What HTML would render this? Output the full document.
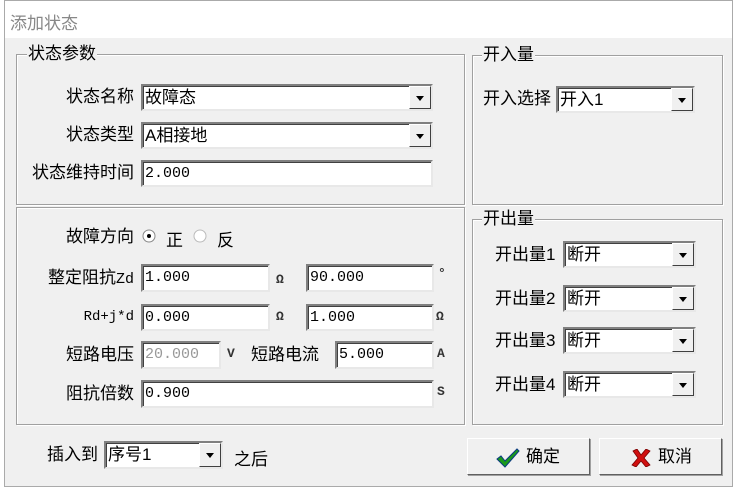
<!DOCTYPE html>
<html><head><meta charset="utf-8"><style>
*{box-sizing:border-box;margin:0;padding:0}
body{width:738px;height:491px;background:#fff;position:relative;overflow:hidden;font-family:"Liberation Sans","Noto Sans CJK SC",sans-serif;font-size:17px;color:#000}
.a{position:absolute;white-space:nowrap}
#win{position:absolute;left:4px;top:0;width:729px;height:487px;border:1px solid #aaa;background:#f0f0f0}
#title{position:absolute;left:5px;top:1px;width:727px;height:37px;background:#fff}
.grp{position:absolute;border:1px solid #a0a0a0;box-shadow:inset 1px 1px 0 #fff,1px 1px 0 #fff}
.gt{position:absolute;background:#f0f0f0;padding:0 1px;font-size:17px;line-height:18px}
.inp{position:absolute;background:#fff;border:2px solid;border-color:#808080 #e8e8e8 #e8e8e8 #808080;box-shadow:inset 1px 1px 0 #404040;font-family:"Liberation Mono","Noto Sans CJK SC",monospace;font-size:15px;padding-left:2px;line-height:23px;white-space:nowrap}
.cj{font-family:"Liberation Sans","Noto Sans CJK SC",sans-serif;font-size:17px}
.cb .btn{position:absolute;right:0;top:0;width:22px;height:100%;background:#f0f0f0;border:1px solid;border-color:#fff #404040 #404040 #fff}
.cb .btn:after{content:"";position:absolute;left:6px;top:9px;border:4px solid transparent;border-top:5px solid #000;border-bottom:0;width:0}
.lb{position:absolute;text-align:right;font-size:17px;line-height:20px;white-space:nowrap}
.u{position:absolute;font-family:"Liberation Mono",monospace;font-size:13px;font-weight:bold;color:#333}
.b{position:absolute;background:#f0f0f0;border:1px solid;border-color:#fff #606060 #606060 #fff;box-shadow:1px 1px 0 #a0a0a0;font-size:17px;line-height:35px;text-align:center}
</style></head><body>
<div id="win"></div>
<div id="title"><span class="a" style="left:5px;top:8px;font-size:17px;color:#888">添加状态</span></div>

<div class="grp" style="left:16px;top:54px;width:449px;height:151px"></div>
<div class="gt" style="left:27px;top:45px">状态参数</div>
<div class="grp" style="left:16px;top:207px;width:449px;height:218px"></div>
<div class="grp" style="left:472px;top:55px;width:251px;height:150px"></div>
<div class="gt" style="left:482px;top:46px">开入量</div>
<div class="grp" style="left:472px;top:219px;width:251px;height:206px"></div>
<div class="gt" style="left:482px;top:210px">开出量</div>

<div class="lb" style="right:604px;top:87px">状态名称</div>
<div class="inp cb cj" style="left:141px;top:84px;width:292px;height:27px">故障态<span class="btn"></span></div>
<div class="lb" style="right:604px;top:125px">状态类型</div>
<div class="inp cb cj" style="left:141px;top:122px;width:292px;height:27px">A相接地<span class="btn"></span></div>
<div class="lb" style="right:604px;top:163px">状态维持时间</div>
<div class="inp" style="left:141px;top:160px;width:292px;height:27px">2.000</div>

<div class="lb" style="right:604px;top:227px">故障方向</div>
<svg class="a" style="left:142px;top:229px" width="14" height="14"><circle cx="7" cy="7" r="6" fill="#fff" stroke="#888"/><circle cx="7" cy="7" r="2" fill="#000"/></svg>
<span class="a" style="left:166px;top:226px;font-size:17px">正</span>
<svg class="a" style="left:193px;top:229px" width="14" height="14"><circle cx="7" cy="7" r="6" fill="#fff" stroke="#bbb"/></svg>
<span class="a" style="left:217px;top:226px;font-size:17px">反</span>

<div class="lb" style="right:604px;top:268px">整定阻抗<span style="font-family:'Liberation Mono',monospace;font-size:15px">Zd</span></div>
<div class="inp" style="left:141px;top:264px;width:129px;height:28px">1.000</div>
<span class="u" style="left:276px;top:272px">Ω</span>
<div class="inp" style="left:306px;top:264px;width:128px;height:28px">90.000</div>
<span class="u" style="left:438px;top:266px">°</span>

<div class="lb" style="right:604px;top:307px;font-family:'Liberation Mono',monospace;font-size:14px">Rd+j*d</div>
<div class="inp" style="left:141px;top:304px;width:129px;height:27px">0.000</div>
<span class="u" style="left:276px;top:309px">Ω</span>
<div class="inp" style="left:306px;top:304px;width:128px;height:27px">1.000</div>
<span class="u" style="left:436px;top:309px">Ω</span>

<div class="lb" style="right:604px;top:345px">短路电压</div>
<div class="inp" style="left:141px;top:341px;width:80px;height:28px;color:#999">20.000</div>
<span class="u" style="left:227px;top:346px">V</span>
<div class="lb" style="left:251px;top:345px">短路电流</div>
<div class="inp" style="left:335px;top:341px;width:99px;height:28px">5.000</div>
<span class="u" style="left:437px;top:346px">A</span>

<div class="lb" style="right:604px;top:384px">阻抗倍数</div>
<div class="inp" style="left:141px;top:380px;width:293px;height:28px">0.900</div>
<span class="u" style="left:437px;top:384px">S</span>

<div class="lb" style="left:47px;top:445px">插入到</div>
<div class="inp cb cj" style="left:104px;top:441px;width:119px;height:28px">序号1<span class="btn"></span></div>
<span class="a" style="left:234px;top:445px">之后</span>

<div class="lb" style="left:483px;top:89px">开入选择</div>
<div class="inp cb cj" style="left:556px;top:86px;width:139px;height:27px">开入1<span class="btn"></span></div>

<div class="lb" style="left:495px;top:245px">开出量1</div>
<div class="inp cb cj" style="left:563px;top:241px;width:133px;height:27px">断开<span class="btn"></span></div>
<div class="lb" style="left:495px;top:289px">开出量2</div>
<div class="inp cb cj" style="left:563px;top:285px;width:133px;height:27px">断开<span class="btn"></span></div>
<div class="lb" style="left:495px;top:331px">开出量3</div>
<div class="inp cb cj" style="left:563px;top:327px;width:133px;height:27px">断开<span class="btn"></span></div>
<div class="lb" style="left:495px;top:375px">开出量4</div>
<div class="inp cb cj" style="left:563px;top:371px;width:133px;height:27px">断开<span class="btn"></span></div>

<div class="b" style="left:467px;top:438px;width:123px;height:37px">
<svg style="position:absolute;left:28px;top:9px" width="24" height="20"><path d="M1 11 L5 8 L9 13 L21 1 L23 3 L9 19 Z" fill="#1a9a1a" stroke="#0a3a80" stroke-width="1"/></svg>
<span style="position:absolute;left:58px;top:0">确定</span></div>
<div class="b" style="left:599px;top:438px;width:123px;height:37px">
<svg style="position:absolute;left:31px;top:10px" width="20" height="18"><path d="M2 2 L6 0 L10 6 L15 0 L19 2 L13 9 L19 16 L15 18 L10 12 L5 18 L1 16 L7 9 Z" fill="#d01010" stroke="#700" stroke-width="0.8"/></svg>
<span style="position:absolute;left:58px;top:0">取消</span></div>
</body></html>
